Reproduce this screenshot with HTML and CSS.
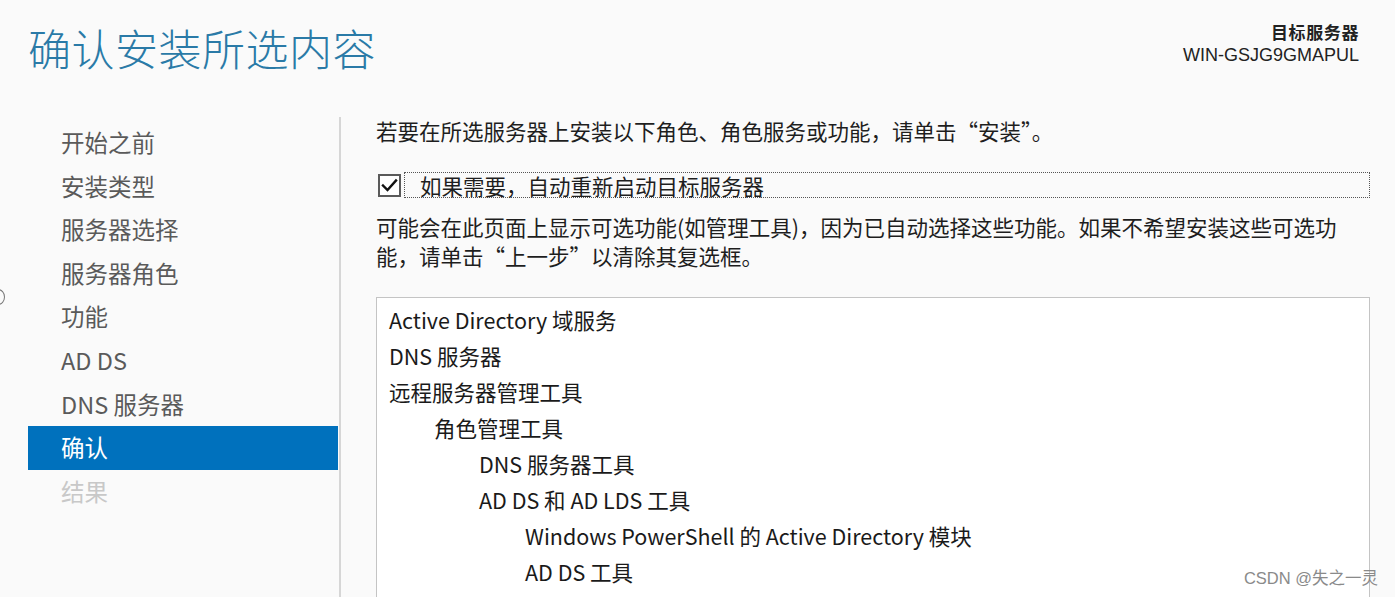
FILE: index.html
```html
<!DOCTYPE html>
<html lang="zh-CN">
<head>
<meta charset="utf-8">
<title>确认安装所选内容</title>
<link rel="stylesheet" href="styles.css">
</head>
<body>
<div class="page">
  <span class="edge-mark"></span>
  <header class="header">
    <h1 class="title">确认安装所选内容</h1>
    <div class="server">
      <div class="server-label">目标服务器</div>
      <div class="server-name">WIN-GSJG9GMAPUL</div>
    </div>
  </header>
  <div class="main">
    <nav class="nav">
      <div class="nav-item">开始之前</div>
      <div class="nav-item">安装类型</div>
      <div class="nav-item">服务器选择</div>
      <div class="nav-item">服务器角色</div>
      <div class="nav-item">功能</div>
      <div class="nav-item">AD DS</div>
      <div class="nav-item">DNS 服务器</div>
      <div class="nav-item active">确认</div>
      <div class="nav-item disabled">结果</div>
    </nav>
    <section class="content">
      <p class="intro">若要在所选服务器上安装以下角色、角色服务或功能，请单击“安装”。</p>
      <div class="check-row">
        <svg class="checkbox" width="23" height="23" viewBox="0 0 23 23">
          <rect x="1" y="1" width="21" height="21" fill="#fff" stroke="#5a5a5a" stroke-width="2"/>
          <path d="M5 11.5 L9.5 16 L18 6.5" fill="none" stroke="#111" stroke-width="2.4" stroke-linecap="square"/>
        </svg>
        <div class="check-label">如果需要，自动重新启动目标服务器</div>
      </div>
      <p class="note">可能会在此页面上显示可选功能(如管理工具)，因为已自动选择这些功能。如果不希望安装这些可选功<br>能，请单击“上一步”以清除其复选框。</p>
      <div class="list">
        <div class="row lvl0">Active Directory 域服务</div>
        <div class="row lvl0">DNS 服务器</div>
        <div class="row lvl0">远程服务器管理工具</div>
        <div class="row lvl1">角色管理工具</div>
        <div class="row lvl2">DNS 服务器工具</div>
        <div class="row lvl2">AD DS 和 AD LDS 工具</div>
        <div class="row lvl3">Windows PowerShell 的 Active Directory 模块</div>
        <div class="row lvl3">AD DS 工具</div>
        <div class="row lvl4">Active Directory 管理中心</div>
      </div>
    </section>
  </div>
  <div class="watermark">CSDN @失之一灵</div>
</div>
</body>
</html>
```

FILE: styles.css
```css
html, body {
  margin: 0;
  padding: 0;
  height: 597px;
  overflow: hidden;
  background: #fafafa;
}

.page {
  position: relative;
  height: 597px;
  overflow: hidden;
  font-family: "Noto Sans CJK SC", "Noto Sans", sans-serif;
  color: #1e1e1e;
}

.edge-mark {
  position: absolute;
  left: -9px;
  top: 289px;
  width: 12px;
  height: 14px;
  border: 1.5px solid #777;
  border-radius: 50%;
}

.header {
  height: 117px;
  box-sizing: border-box;
  display: flex;
  justify-content: space-between;
  align-items: flex-start;
  padding: 19px 36px 0 28px;
}

.title {
  margin: 0;
  font-size: 43px;
  line-height: 56px;
  font-weight: 300;
  color: #2a7aa7;
  letter-spacing: 0.5px;
}

.server {
  text-align: right;
  padding-top: 3px;
}

.server-label {
  font-size: 17px;
  line-height: 19px;
  font-weight: 700;
  letter-spacing: 0.6px;
  color: #222;
}

.server-name {
  margin-top: 4px;
  font-family: "Liberation Sans", "Noto Sans", sans-serif;
  font-size: 18px;
  line-height: 21px;
  color: #222;
}

.main {
  display: flex;
  height: 480px;
}

.nav {
  margin-left: 28px;
  width: 313px;
  padding-top: 4px;
  border-right: 2px solid #d6d6d6;
  box-sizing: border-box;
  flex: none;
}

.nav-item {
  height: 43.6px;
  line-height: 43.6px;
  width: 310px;
  padding-left: 33px;
  box-sizing: border-box;
  font-size: 23.5px;
  color: #5a5a5a;
}

.nav-item.active {
  background: #0071bd;
  color: #fff;
}

.nav-item.disabled {
  color: #c8c8c8;
}

.content {
  flex: 1;
  padding-left: 35px;
  padding-right: 25px;
  font-size: 21.5px;
}

.intro {
  margin: 0;
  line-height: 28px;
}

.check-row {
  margin-top: 27px;
  height: 26px;
  display: flex;
  align-items: center;
}

.checkbox {
  flex: none;
  margin-left: 2px;
}

.check-label {
  flex: 1;
  margin-left: 3px;
  height: 26px;
  line-height: 25px;
  box-sizing: border-box;
  border: 1px dotted #555;
  padding-left: 15px;
}

.note {
  margin: 14px 0 0;
  line-height: 29px;
}

.list {
  margin-top: 27px;
  height: 320px;
  background: #fff;
  border: 1px solid #c4c4c4;
  padding-top: 4px;
  box-sizing: border-box;
}

.row {
  height: 36px;
  line-height: 36px;
  white-space: nowrap;
  color: #1a1a1a;
}

.lvl0 { padding-left: 12px; }
.lvl1 { padding-left: 57px; }
.lvl2 { padding-left: 102px; }
.lvl3 { padding-left: 148px; }
.lvl4 { padding-left: 193px; }

.watermark {
  position: absolute;
  right: 17px;
  bottom: 8px;
  font-family: "Liberation Sans", "Noto Sans CJK SC", sans-serif;
  font-size: 16.5px;
  color: #8a8a8a;
}
```
